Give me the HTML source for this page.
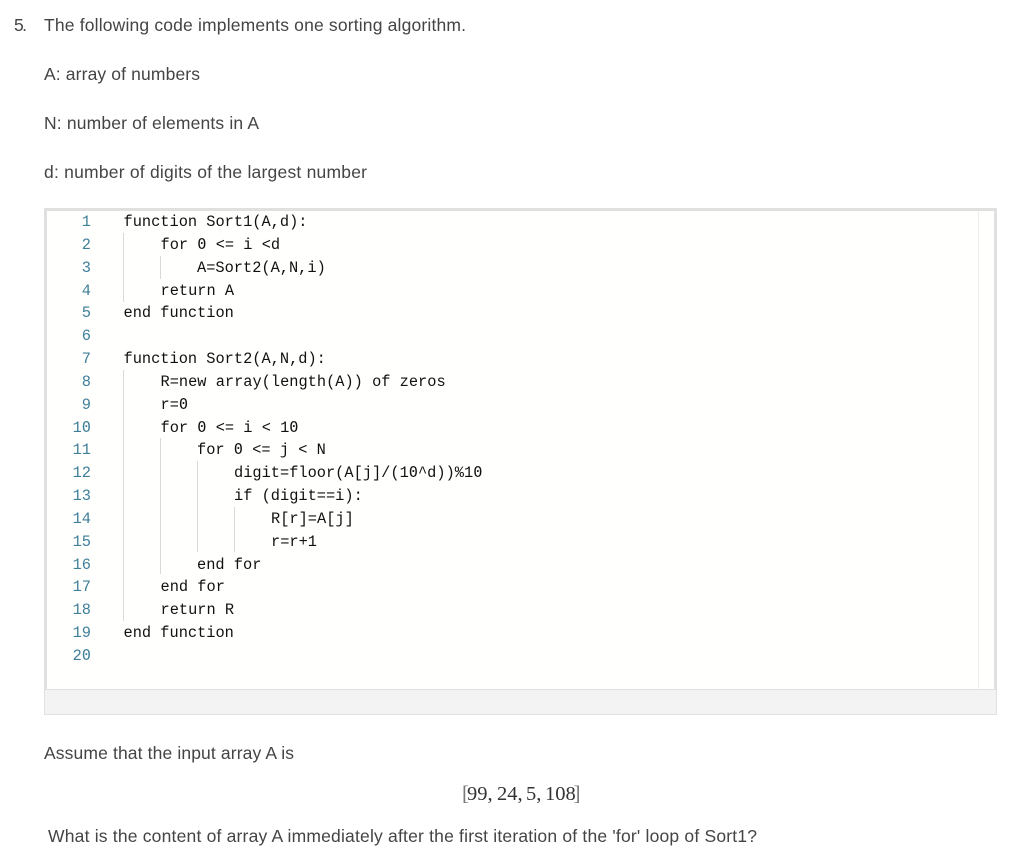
<!DOCTYPE html>
<html lang="en">
<head>
<meta charset="utf-8">
<title>Sorting question</title>
<style>
html,body{margin:0;padding:0;background:#fff;width:1024px;height:863px;overflow:hidden}
svg{display:block}
.b{font-family:"Liberation Sans",sans-serif;font-size:17.5px;fill:#444}
.c{font-family:"Liberation Mono",monospace;font-size:15.33px;fill:#111;white-space:pre}
.z{font-family:"DejaVu Sans Mono",monospace;font-size:15.28px}
.n{font-family:"Liberation Mono",monospace;font-size:15.33px;fill:#3f7f99;text-anchor:end}
.m{font-family:"Liberation Serif",serif;font-size:20.5px;fill:#333}
.k{font-family:"Liberation Serif",serif;font-size:21px;fill:#777}
</style>
</head>
<body>
<svg width="1024" height="863" viewBox="0 0 1024 863" xmlns="http://www.w3.org/2000/svg">
<rect width="1024" height="863" fill="#fff"/>
<text class="b" x="14" y="31" textLength="13" lengthAdjust="spacing">5.</text>
<text class="b" x="44" y="31" textLength="422" lengthAdjust="spacing">The following code implements one sorting algorithm.</text>
<text class="b" x="44" y="80" textLength="156" lengthAdjust="spacing">A: array of numbers</text>
<text class="b" x="44" y="129" textLength="215" lengthAdjust="spacing">N: number of elements in A</text>
<text class="b" x="44" y="178" textLength="323" lengthAdjust="spacing">d: number of digits of the largest number</text>

<rect x="44" y="208" width="953" height="507" fill="#e0e0e0"/>
<rect x="47" y="211" width="947" height="478" fill="#fffffd"/>
<rect x="978" y="211" width="1" height="478" fill="#eeeeee"/>
<rect x="45" y="690" width="951" height="24" fill="#f3f3f3"/>

<g fill="#d9d9d9">
<rect x="123" y="233" width="1" height="69"/>
<rect x="160" y="256" width="1" height="23"/>
<rect x="123" y="370" width="1" height="251"/>
<rect x="160" y="438" width="1" height="136"/>
<rect x="197" y="461" width="1" height="91"/>
<rect x="234" y="507" width="1" height="45"/>
</g>

<g class="nums">
<text class="n" x="91" y="226">1</text>
<text class="n" x="91" y="249">2</text>
<text class="n" x="91" y="272">3</text>
<text class="n" x="91" y="295">4</text>
<text class="n" x="91" y="317">5</text>
<text class="n" x="91" y="340">6</text>
<text class="n" x="91" y="363">7</text>
<text class="n" x="91" y="386">8</text>
<text class="n" x="91" y="409">9</text>
<text class="n" x="91" y="432">1<tspan class="z">0</tspan></text>
<text class="n" x="91" y="454">11</text>
<text class="n" x="91" y="477">12</text>
<text class="n" x="91" y="500">13</text>
<text class="n" x="91" y="523">14</text>
<text class="n" x="91" y="546">15</text>
<text class="n" x="91" y="569">16</text>
<text class="n" x="91" y="591">17</text>
<text class="n" x="91" y="614">18</text>
<text class="n" x="91" y="637">19</text>
<text class="n" x="91" y="660">2<tspan class="z">0</tspan></text>
</g>

<text class="c" x="123.5" y="226">function Sort1(A,d):</text>
<text class="c" x="160.5" y="249">for <tspan class="z">0</tspan> &lt;= i &lt;d</text>
<text class="c" x="197" y="272">A=Sort2(A,N,i)</text>
<text class="c" x="160.5" y="295">return A</text>
<text class="c" x="123.5" y="317">end function</text>
<text class="c" x="123.5" y="363">function Sort2(A,N,d):</text>
<text class="c" x="160.5" y="386">R=new array(length(A)) of zeros</text>
<text class="c" x="160.5" y="409">r=<tspan class="z">0</tspan></text>
<text class="c" x="160.5" y="432">for <tspan class="z">0</tspan> &lt;= i &lt; 1<tspan class="z">0</tspan></text>
<text class="c" x="197" y="454">for <tspan class="z">0</tspan> &lt;= j &lt; N</text>
<text class="c" x="234" y="477">digit=floor(A[j]/(1<tspan class="z">0</tspan>^d))%1<tspan class="z">0</tspan></text>
<text class="c" x="234" y="500">if (digit==i):</text>
<text class="c" x="271" y="523">R[r]=A[j]</text>
<text class="c" x="271" y="546">r=r+1</text>
<text class="c" x="197" y="569">end for</text>
<text class="c" x="160.5" y="591">end for</text>
<text class="c" x="160.5" y="614">return R</text>
<text class="c" x="123.5" y="637">end function</text>

<text class="b" x="44" y="759" textLength="250" lengthAdjust="spacing">Assume that the input array A is</text>
<text class="k" x="462" y="800">[</text>
<text class="m" x="467" y="800">99,</text>
<text class="m" x="497" y="800">24,</text>
<text class="m" x="526" y="800">5,</text>
<text class="m" x="545" y="800">108</text>
<text class="k" x="573.5" y="800">]</text>
<text class="b" x="48" y="842" textLength="709" lengthAdjust="spacing">What is the content of array A immediately after the first iteration of the 'for' loop of Sort1?</text>
</svg>
</body>
</html>
